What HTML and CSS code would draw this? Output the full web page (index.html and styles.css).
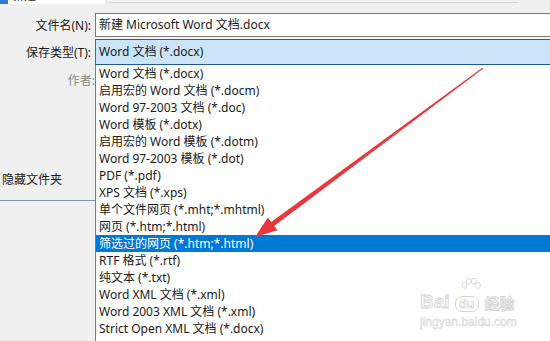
FILE: index.html
```html
<!DOCTYPE html>
<html lang="zh-CN">
<head>
    <meta charset="UTF-8">
    <title>另存为</title>
    <link rel="stylesheet" href="styles.css">
</head>
<body>
    <div class="dialog">
        <div class="titlebar">
            <div class="title-tab">
                <span class="app-icon"></span>
                <span class="title-text">新建</span>
            </div>
            <div class="search-edge"></div>
        </div>

        <div class="field-row name-row">
            <label class="field-label">文件名(N):</label>
            <div class="textbox">新建 Microsoft Word 文档.docx</div>
        </div>

        <div class="field-row type-row">
            <label class="field-label">保存类型(T):</label>
            <div class="combo">Word 文档 (*.docx)</div>
        </div>

        <div class="lower">
            <div class="side">
                <div class="author">作者:</div>
                <div class="folder-toggle">隐藏文件夹</div>
            </div>
            <ul class="type-list">
                <li>Word 文档 (*.docx)</li>
                <li>启用宏的 Word 文档 (*.docm)</li>
                <li>Word 97-2003 文档 (*.doc)</li>
                <li>Word 模板 (*.dotx)</li>
                <li>启用宏的 Word 模板 (*.dotm)</li>
                <li>Word 97-2003 模板 (*.dot)</li>
                <li>PDF (*.pdf)</li>
                <li>XPS 文档 (*.xps)</li>
                <li>单个文件网页 (*.mht;*.mhtml)</li>
                <li>网页 (*.htm;*.html)</li>
                <li class="selected">筛选过的网页 (*.htm;*.html)</li>
                <li>RTF 格式 (*.rtf)</li>
                <li>纯文本 (*.txt)</li>
                <li>Word XML 文档 (*.xml)</li>
                <li>Word 2003 XML 文档 (*.xml)</li>
                <li>Strict Open XML 文档 (*.docx)</li>
            </ul>
        </div>
    </div>

    <!-- red pointer drawn over the list -->
    <svg class="arrow" width="550" height="341" viewBox="0 0 550 341">
        <polygon fill="#e8383d" points="483.3,68.4 274.2,225.9 277.5,230.3 255,237 267.9,217.5 271.2,221.9 482.7,67.6"/>
    </svg>

    <div class="watermark">
        <div class="wm-logo">
            <span class="wm-bai">Bai</span>
            <span class="wm-paw">
                <svg width="28" height="22" viewBox="0 0 28 22">
                    <g fill="none" stroke="#d6d6d6" stroke-width="1.2">
                        <ellipse cx="6" cy="9" rx="3" ry="3.6"/>
                        <ellipse cx="11" cy="4" rx="3" ry="3.6"/>
                        <ellipse cx="17.5" cy="4" rx="3" ry="3.6"/>
                        <ellipse cx="22.5" cy="9" rx="3" ry="3.6"/>
                    </g>
                </svg>
                <span class="wm-du">du</span>
            </span>
            <span class="wm-jy">经验</span>
        </div>
        <div class="wm-url">jingyan.baidu.com</div>
    </div>
</body>
</html>
```

FILE: styles.css
```css
html, body {
    margin: 0;
    padding: 0;
}
body {
    width: 550px;
    height: 341px;
    overflow: hidden;
    background: #f0f0f0;
    font-family: "Noto Sans", "Noto Sans CJK SC", sans-serif;
    font-size: 12px;
    color: #1a1a1a;
    position: relative;
}
.dialog {
    display: flex;
    flex-direction: column;
    height: 341px;
}
.titlebar {
    height: 13px;
    display: flex;
    align-items: flex-start;
}
.title-tab {
    width: 105px;
    height: 4px;
    background: #fff;
    display: flex;
    overflow: hidden;
}
.app-icon {
    width: 8px;
    height: 4px;
    background: #2f7ccb;
}
.title-text {
    margin: -12px 0 0 4px;
    line-height: 16px;
    font-size: 12px;
}
.search-edge {
    width: 408px;
    height: 2px;
    margin-left: 5px;
    border-bottom: 1px solid #d6d6d6;
}
.field-row {
    display: grid;
    grid-template-columns: 95px 1fr;
    align-items: center;
}
.field-label {
    text-align: right;
    padding-right: 4px;
    white-space: nowrap;
}
.name-row {
    height: 24px;
}
.textbox {
    height: 22px;
    line-height: 22px;
    padding-left: 3px;
    background: #fff;
    border: 1px solid #7a7a7a;
    border-right: none;
    white-space: nowrap;
}
.type-row {
    height: 26px;
    margin-top: 2px;
}
.combo {
    height: 24px;
    line-height: 24px;
    padding-left: 3px;
    background: #cce4f7;
    border-top: 1px solid #3d5d7c;
    border-bottom: 1px solid #1f5b8e;
    border-left: 1px solid #3d6a96;
    white-space: nowrap;
}
.lower {
    flex: 1;
    display: grid;
    grid-template-columns: 95px 1fr;
    min-height: 0;
}
.side {
    overflow: hidden;
}
.author {
    padding-top: 7px;
    line-height: 17px;
    text-align: right;
    color: #8a8a8a;
    white-space: nowrap;
}
.folder-toggle {
    margin-top: 82px;
    padding: 0 0 12px 2px;
    line-height: 17px;
    border-bottom: 1px solid #7c96b4;
}
.type-list {
    list-style: none;
    margin: 0;
    padding: 0;
    background: #fff;
    border-left: 1px solid #6f7f8f;
    overflow: hidden;
}
.type-list li {
    height: 17px;
    line-height: 17px;
    padding-left: 3px;
    white-space: nowrap;
}
.type-list li.selected {
    background: #0078d7;
    color: #fff;
}
.arrow {
    position: absolute;
    left: 0;
    top: 0;
    pointer-events: none;
}
.watermark {
    position: absolute;
    left: 420px;
    top: 278px;
    width: 100px;
    color: #f7f7f7;
    -webkit-text-stroke: 0.8px #d4d4d4;
    pointer-events: none;
}
.wm-logo {
    display: flex;
    align-items: flex-end;
    height: 34px;
}
.wm-bai {
    font-family: "Liberation Sans", sans-serif;
    font-weight: bold;
    font-size: 19px;
    line-height: 20px;
}
.wm-paw {
    position: relative;
    width: 34px;
    height: 34px;
    display: flex;
    flex-direction: column;
    align-items: center;
}
.wm-paw svg {
    margin-left: 8px;
}
.wm-du {
    font-family: "Liberation Sans", sans-serif;
    font-weight: bold;
    font-size: 13px;
    line-height: 14px;
    padding: 0 3px;
    border: 1px solid #d4d4d4;
    border-radius: 7px;
    -webkit-text-stroke: 0.6px #d4d4d4;
}
.wm-jy {
    font-family: "Noto Sans CJK SC", sans-serif;
    font-size: 15px;
    line-height: 18px;
    font-weight: bold;
    margin-left: 1px;
}
.wm-url {
    font-family: "Liberation Sans", sans-serif;
    font-size: 12px;
    line-height: 14px;
    margin-top: 3px;
    -webkit-text-stroke: 0.5px #d4d4d4;
}
```
